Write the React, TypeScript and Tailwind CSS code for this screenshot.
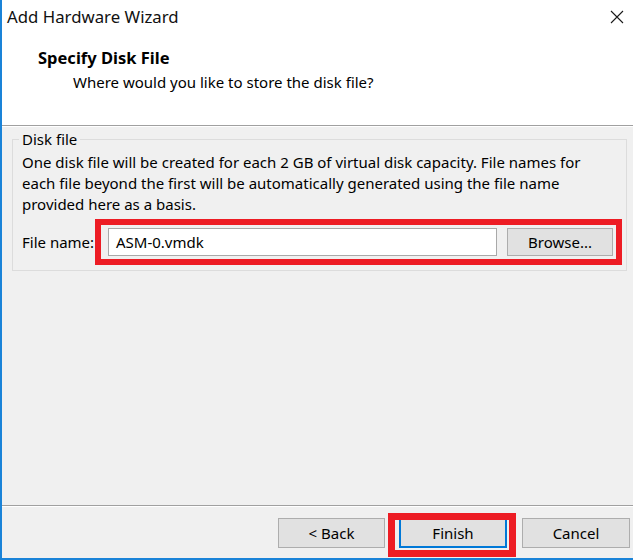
import React from "react";

export default function App() {
  return (
    <div className="w-[633px] h-[560px] bg-[#f0f0f0] border-l-2 border-b-2 border-[#1a83d8] flex flex-col relative overflow-hidden text-black font-['Segoe_UI','Noto_Sans',sans-serif] text-[15px]">
      {/* header */}
      <div className="bg-white h-[126px] border-b border-[#a0a0a0] flex flex-col">
        <div className="h-[34px] flex items-center justify-between pl-[5px] pr-[9px]">
          <span className="text-[16.8px] leading-[20px] text-[#111]">Add Hardware Wizard</span>
          <svg width="14" height="14" viewBox="0 0 14 14">
            <path d="M1 1 L13 13 M13 1 L1 13" stroke="#1a1a1a" strokeWidth="1.1" fill="none" />
          </svg>
        </div>
        <div className="pl-[36px] mt-[14px] font-bold text-[16.5px] leading-[20px]">Specify Disk File</div>
        <div className="pl-[71px] mt-[4px] leading-[20px]">Where would you like to store the disk file?</div>
      </div>
      <div className="h-px bg-white" />

      {/* group box */}
      <div className="ml-[10px] mr-[6px] mt-[12px] border border-[#dcdcdc] pl-[9px] pr-[6px] pb-[14px] flex flex-col">
        <div className="-mt-[11px] -ml-[3px] px-[3px] w-fit bg-[#f0f0f0] leading-[20px]">Disk file</div>
        <p className="leading-[21px] mt-[3px]">
          One disk file will be created for each 2 GB of virtual disk capacity. File names for
          <br />
          each file beyond the first will be automatically generated using the file name
          <br />
          provided here as a basis.
        </p>
        <div className="flex items-center mt-[13px]">
          <span className="w-[86px] shrink-0">File name:</span>
          <div className="w-[389px] h-[28px] bg-white border border-[#a9a9a9] flex items-center pl-[7px]">
            ASM-0.vmdk
          </div>
          <div className="ml-[10px] w-[106px] h-[28px] bg-[#e1e1e1] border border-[#adadad] flex items-center justify-center">
            Browse...
          </div>
        </div>
      </div>

      <div className="flex-1" />

      {/* bottom separator */}
      <div className="h-px bg-[#a0a0a0]" />
      <div className="h-px bg-white" />
      <div className="h-[51px] flex items-start justify-end pt-[11px] pr-[3px]">
        <div className="w-[107px] h-[30px] bg-[#e1e1e1] border border-[#adadad] flex items-center justify-center">&lt; Back</div>
        <div className="ml-[14px] w-[108px] h-[30px] bg-[#e1e1e1] border-2 border-[#0078d7] flex items-center justify-center">Finish</div>
        <div className="ml-[15px] w-[108px] h-[30px] bg-[#e1e1e1] border border-[#adadad] flex items-center justify-center">Cancel</div>
      </div>

      {/* red annotation boxes */}
      <div className="absolute left-[93px] top-[219px] w-[527px] h-[46px] border-[6px] border-[#ed1c24]" />
      <div className="absolute left-[386px] top-[513px] w-[128px] h-[44px] border-[7px] border-[#ed1c24]" />
    </div>
  );
}
